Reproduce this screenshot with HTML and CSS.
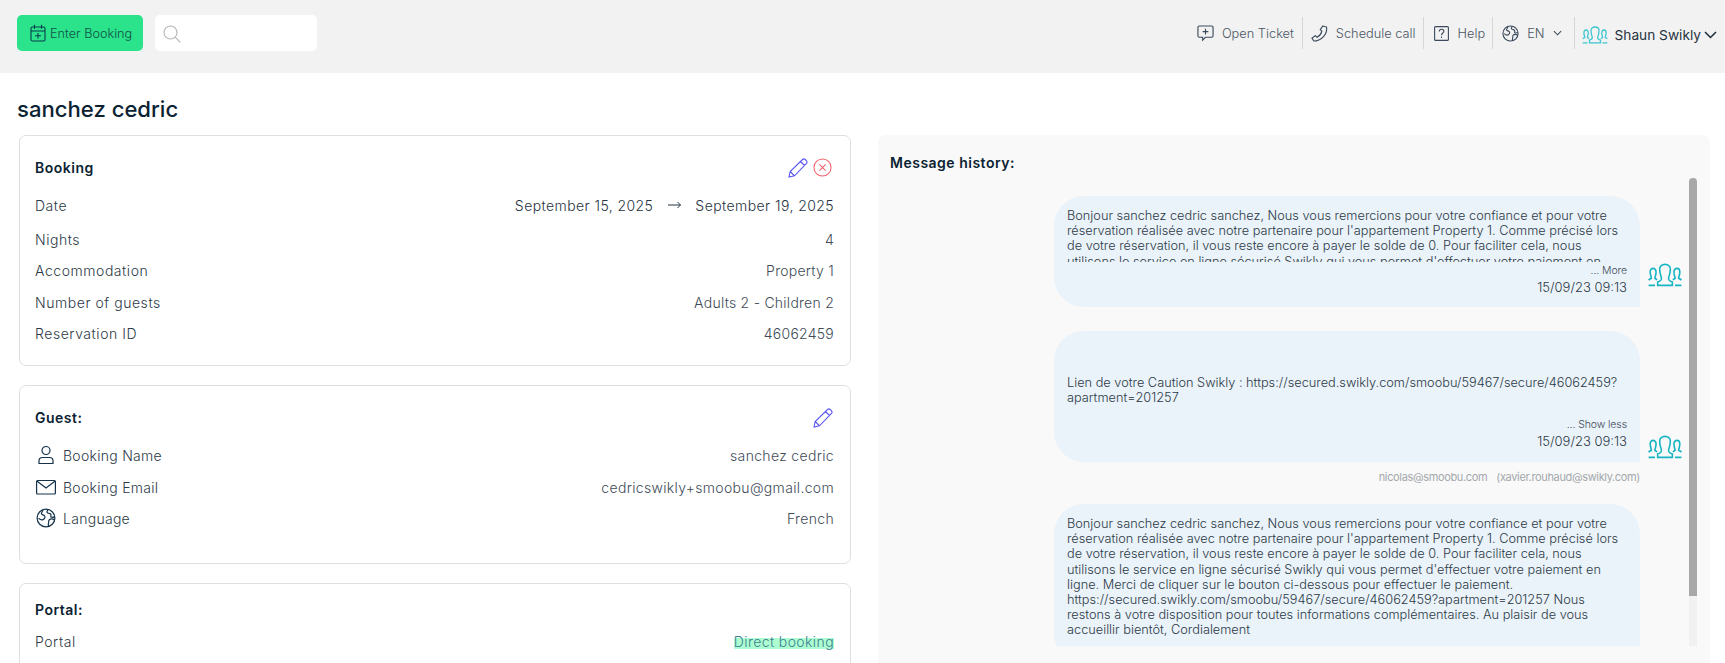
FILE: index.html
```html
<!DOCTYPE html>
<html lang="en">
<head>
<meta charset="utf-8">
<title>sanchez cedric</title>
<link rel="stylesheet" href="styles.css">
</head>
<body>
<header class="topbar">
  <div class="top-left">
    <button class="enter-btn">
      <svg class="ic-cal" viewBox="0 0 16 18" fill="none" stroke="#0d3b4f" stroke-width="1.1"><rect x="1" y="3" width="14" height="14" rx="1.5"/><path d="M1 7h14M4.500 .8v4M11.500 .8v4M8 9v5.500M5 11.800h6"/></svg>
      <span>Enter Booking</span>
    </button>
    <div class="search">
      <svg class="ic-search" viewBox="0 0 18 18" fill="none" stroke="#b9b9b9" stroke-width="1.2"><circle cx="7.500" cy="7.500" r="6.500"/><path d="M12.300 12.300l5 5"/></svg>
    </div>
  </div>
  <nav class="top-right">
    <a class="nav-item ticket"><svg class="ic-nav" viewBox="0 0 18 18" fill="none" stroke="#3a4a5c" stroke-width="1.200"><path d="M2.500 1h13a1.500 1.500 0 0 1 1.500 1.500v9a1.500 1.500 0 0 1-1.500 1.500H9l-3 3v-3H2.500A1.500 1.500 0 0 1 1 11.500v-9A1.500 1.500 0 0 1 2.500 1zM9 4v6M6 7h6"/></svg><span>Open Ticket</span></a>
    <a class="nav-item phone"><svg class="ic-nav" viewBox="0 0 18 18" fill="none" stroke="#3a4a5c" stroke-width="1.200"><path d="M12.500 1l4 1.200c.5 4-1 7.800-3.500 10.300S6.500 17 3 17l-2-3.200 3.500-2.500 2 1.700c2.500-1.500 4.500-4 5-6.500L9.800 5z"/></svg><span>Schedule call</span></a>
    <a class="nav-item help"><svg class="ic-nav" viewBox="0 0 15 15" fill="none" stroke="#3a4a5c" stroke-width="1.100"><rect x=".6" y=".6" width="13.800" height="13.800" rx="1"/><path d="M5.300 5.500c0-3 4.600-3 4.600-.2 0 1.700-2.400 1.700-2.400 4"/><path d="M7.500 10.500v1.500"/></svg><span>Help</span></a>
    <a class="nav-item lang"><svg class="ic-nav" viewBox="0 0 18 18" fill="none" stroke="#3a4a5c" stroke-width="1.200"><use href="#globe-shape"/></svg><span>EN</span><svg class="chev-sm" viewBox="0 0 10 6" fill="none" stroke="#3a4a5c" stroke-width="1.200"><path d="M1 1l4 4 4-4"/></svg></a>
    <a class="nav-item user"><svg class="ic-users" viewBox="0 0 26 18" fill="none" stroke="#3ec6d3" stroke-width="1.300"><use href="#users-shape"/></svg><span>Shaun Swikly</span><svg class="chev-lg" viewBox="0 0 13 8" fill="none" stroke="#1d2b3a" stroke-width="1.500"><path d="M1 1l5.500 5.500L12 1"/></svg></a>
  </nav>
</header>

<svg class="defs">
  <defs>
    <g id="users-shape">
      <path d="M7.500 16.800v-2.600c2.500-.7 3.200-1.500 2.700-3.500C9.200 8.200 9 6 9 4.500 9 2.500 10.700 1 13 1s4 1.500 4 3.500c0 1.500-.2 3.700-1.200 6.200-.5 2 .2 2.800 2.700 3.500v2.600z"/>
      <path d="M7 12.800c-.5-.6-1-1-1.600-1.300.3-2 .9-2.800.9-4.800 0-1.300-.8-2.700-2.300-2.700S1.900 5.400 1.900 6.700c0 2 .6 2.800.9 4.800-.8.400-1.500.7-2.100 1.300M.7 16.800h4.800"/>
      <path d="M19 12.800c.5-.6 1-1 1.600-1.300-.3-2-.9-2.800-.9-4.800 0-1.300.8-2.700 2.300-2.700s2.100 1.400 2.100 2.700c0 2-.6 2.800-.9 4.800.8.400 1.500.7 2.100 1.300M20.500 16.800h4.800"/>
    </g>
    <g id="globe-shape">
      <circle cx="9" cy="9" r="8"/>
      <path d="M6.200 1.500C6.600 3 4.800 3.600 4.800 5c0 1.300 2.200 1 3 2.200.8 1.200-.3 2.800-1.500 3.300-1.400.6-3-.4-4-1.300"/>
      <path d="M11 1.400c-1 1-1.600 2.200-.6 3 1 .8 2.500.2 3 1.300.4 1-.6 1.700.2 2.500.8.600 2 .2 3.200-.2"/>
      <path d="M16.800 11c-1.400-1-3.600-1.400-4.800-.4-1.200 1-.2 2.300-.8 3.400-.4.800-.2 1.600.4 2.500"/>
    </g>
    <g id="pencil-shape">
      <path d="M1 19l1.200-5.500L14.500 1.500c.8-.7 1.900-.7 2.600 0l1.400 1.400c.7.7.7 1.800 0 2.500L6.500 17.800zM12.500 3.500l4 4M2.200 13.500l4.300 4.300"/>
    </g>
  </defs>
</svg>

<main class="page">
  <h1 class="title">sanchez cedric</h1>
  <div class="columns">
    <section class="left">
      <article class="card card-booking">
        <div class="card-head">
          <h2>Booking</h2>
          <div class="actions">
            <svg class="ic-pencil" viewBox="0 0 20 20" fill="none" stroke="#5a55f5" stroke-width="1.100"><use href="#pencil-shape"/></svg>
            <svg class="ic-close" viewBox="0 0 20 20" fill="none" stroke="#f4606c" stroke-width="1.100"><circle cx="10" cy="10" r="9"/><path d="M6.800 6.800l6.400 6.400M13.200 6.800l-6.400 6.400"/></svg>
          </div>
        </div>
        <div class="row row-date"><span class="label">Date</span><span class="value dates"><span>September 15, 2025</span><svg class="arrow" viewBox="0 0 13 8" fill="none" stroke="#27343f" stroke-width="1"><path d="M0 4h12.500M9.500 1l3 3-3 3"/></svg><span>September 19, 2025</span></span></div>
        <div class="row r-nights"><span class="label">Nights</span><span class="value">4</span></div>
        <div class="row r-acc"><span class="label">Accommodation</span><span class="value">Property 1</span></div>
        <div class="row r-num"><span class="label">Number of guests</span><span class="value">Adults 2 - Children 2</span></div>
        <div class="row r-res"><span class="label">Reservation ID</span><span class="value">46062459</span></div>
      </article>

      <article class="card card-guest">
        <div class="card-head">
          <h2>Guest:</h2>
          <div class="actions">
            <svg class="ic-pencil" viewBox="0 0 20 20" fill="none" stroke="#5a55f5" stroke-width="1.100"><use href="#pencil-shape"/></svg>
          </div>
        </div>
        <div class="row r-g1"><span class="label with-icon"><svg class="ic-row" viewBox="0 0 20 20" fill="none" stroke="#14334a" stroke-width="1.200"><circle cx="10" cy="5.500" r="4"/><path d="M3 18.500v-2.500c0-2 1.500-3.500 3.500-3.500h7c2 0 3.500 1.500 3.500 3.500v2.500z"/></svg>Booking Name</span><span class="value">sanchez cedric</span></div>
        <div class="row r-g2"><span class="label with-icon"><svg class="ic-row" viewBox="0 0 20 20" fill="none" stroke="#14334a" stroke-width="1.200"><rect x=".6" y="3.500" width="18.800" height="13.500" rx="1"/><path d="M.8 4l9.200 7 9.200-7"/></svg>Booking Email</span><span class="value">cedricswikly+smoobu@gmail.com</span></div>
        <div class="row r-g3"><span class="label with-icon"><svg class="ic-row" viewBox="0 0 18 18" fill="none" stroke="#14334a" stroke-width="1.100"><use href="#globe-shape"/></svg>Language</span><span class="value">French</span></div>
      </article>

      <article class="card card-portal">
        <h2>Portal:</h2>
        <div class="row r-p"><span class="label">Portal</span><span class="value"><mark class="badge">Direct booking</mark></span></div>
      </article>
    </section>

    <aside class="history">
      <h2 class="history-title">Message history:</h2>
      <div class="scroller">
        <div class="scrollbar"><div class="thumb"></div></div>
        <div class="msg-line m1">
          <div class="bubble">
            <div class="clip">Bonjour sanchez cedric sanchez, Nous vous remercions pour votre confiance et pour votre réservation réalisée avec notre partenaire pour l'appartement Property 1. Comme précisé lors de votre réservation, il vous reste encore à payer le solde de 0. Pour faciliter cela, nous utilisons le service en ligne sécurisé Swikly qui vous permet d'effectuer votre paiement en ligne.</div>
            <div class="more">... More</div>
            <div class="stamp">15/09/23 09:13</div>
          </div>
          <svg class="ic-avatar" viewBox="0 0 26 18" fill="none" stroke="#17b5c4" stroke-width="1.200"><use href="#users-shape"/></svg>
        </div>
        <div class="msg-line m2">
          <div class="bubble">
            <div class="full">Lien de votre Caution Swikly : https://secured.swikly.com/smoobu/59467/secure/46062459?<br>apartment=201257</div>
            <div class="more">... Show less</div>
            <div class="stamp">15/09/23 09:13</div>
          </div>
          <svg class="ic-avatar" viewBox="0 0 26 18" fill="none" stroke="#17b5c4" stroke-width="1.200"><use href="#users-shape"/></svg>
        </div>
        <div class="emails"><span>nicolas@smoobu.com</span><span>(xavier.rouhaud@swikly.com)</span></div>
        <div class="msg-line m3">
          <div class="bubble"><div class="long">Bonjour sanchez cedric sanchez, Nous vous remercions pour votre confiance et pour votre réservation réalisée avec notre partenaire pour l'appartement Property 1. Comme précisé lors de votre réservation, il vous reste encore à payer le solde de 0. Pour faciliter cela, nous utilisons le service en ligne sécurisé Swikly qui vous permet d'effectuer votre paiement en ligne. Merci de cliquer sur le bouton ci-dessous pour effectuer le paiement. https://secured.swikly.com/smoobu/59467/secure/46062459?apartment=201257 Nous restons à votre disposition pour toutes informations complémentaires. Au plaisir de vous accueillir bientôt, Cordialement</div></div>
        </div>
      </div>
    </aside>
  </div>
</main>
</body>
</html>
```
FILE: styles.css
```css
* { box-sizing: border-box; }
html, body { margin: 0; height: 663px; overflow: hidden; background: #fff; }
body { font-family: Inter, "Open Sans", sans-serif; color: #27343f; font-size: 14px; }
.defs { display: none; }

.topbar { height: 73px; background: #f2f2f2; display: flex; justify-content: space-between; padding: 15px 8px 0 17px; }
.top-left { display: flex; gap: 12px; align-items: flex-start; }
.enter-btn { width: 126px; height: 36px; border: 0; border-radius: 5px; background: #2ae38b; color: #135048; display: flex; align-items: center; padding: 0 0 0 13px; gap: 4px; font: 350 12.700px Inter, sans-serif; }
.ic-cal { width: 16px; height: 18px; flex: none; }
.search { width: 162px; height: 36px; background: #fff; border-radius: 5px; padding: 10px 0 0 8px; }
.ic-search { width: 18px; height: 18px; display: block; }

.top-right { display: flex; height: 32px; margin-top: 2px; }
.nav-item { display: flex; align-items: center; color: #4a5664; font-size: 12.800px; font-weight: 350; white-space: nowrap; border-left: 1px solid #d6d6d6; height: 32px; }
.ic-nav { width: 17px; height: 17px; flex: none; }
.ticket { border-left: 0; padding-right: 8px; gap: 8px; }
.phone { padding: 0 7px 0 8px; gap: 8px; }
.help { padding: 0 7px 0 10px; gap: 9px; }
.help .ic-nav { width: 15px; height: 15px; }
.lang { padding: 0 12px 0 9px; gap: 8px; }
.chev-sm { width: 9px; height: 6px; }
.user { padding: 4px 0 0 7px; gap: 7px; font-size: 13.700px; font-weight: 400; color: #27343f; }
.ic-users { width: 26px; height: 18px; }
.chev-lg { width: 13px; height: 8px; margin-left: -4px; }

.page { padding: 0 14px 0 17px; }
.title { margin: 0; height: 62px; padding-top: 23px; font-size: 22.100px; line-height: 27px; font-weight: 500; color: #0b2233; }
.columns { display: flex; height: 528px; overflow: hidden; }
.left { width: 834px; padding-left: 2px; flex: none; }
.card { border: 1px solid #dfdfdf; border-radius: 7px; padding: 0 16px 0 15px; margin-bottom: 19px; }
.card h2, .history-title { margin: 0; font-size: 14px; font-weight: 600; color: #0b2233; line-height: 20px; letter-spacing: .5px; }
.card-head { display: flex; justify-content: space-between; align-items: center; height: 20px; }
.card-booking { height: 231px; padding-top: 22px; }
.card-guest { height: 179px; padding-top: 22px; }
.card-portal { height: 120px; padding-top: 16px; }
.actions { display: flex; gap: 5px; margin-right: 2px; }
.ic-pencil { width: 20px; height: 20px; }
.ic-close { width: 19px; height: 19px; }
.card-guest .actions { margin-right: 1px; }
.row { display: flex; justify-content: space-between; align-items: center; height: 20px; color: #27343f; font-size: 14px; letter-spacing: .25px; }
.label { color: #2c3a46; font-weight: 350; letter-spacing: .55px; }
.value { color: #414c58; font-weight: 300; }
.card-guest .value { letter-spacing: .33px; }
.dates { display: flex; align-items: center; color: #27343f; letter-spacing: .43px; }
.arrow { width: 13px; height: 8px; margin: 0 14px 0 15px; }
.row-date { margin-top: 17px; }
.r-nights { margin-top: 14px; }
.r-acc { margin-top: 11px; }
.r-num { margin-top: 12px; }
.r-res { margin-top: 11px; }
.r-g1 { margin-top: 17px; }
.r-g2 { margin-top: 12px; }
.r-g3 { margin-top: 11px; }
.with-icon { display: flex; align-items: center; gap: 7px; letter-spacing: .28px; }
.ic-row { width: 20px; height: 20px; margin-left: 1px; flex: none; }
.r-p { margin-top: 11px; }
.badge { background: linear-gradient(transparent 0 5px, #adfdd2 5px 16px, transparent 16px); color: #3d7f8f; padding: 0; letter-spacing: .4px; }

.history { margin-left: 27px; width: 832px; height: 528px; background: #f9f9f9; border-radius: 7px 7px 0 0; padding: 18px 0 0 12px; position: relative; }
.history-title { height: 25px; }
.scroller { position: relative; height: 468px; margin-right: 13px; overflow: hidden; }
.scrollbar { position: absolute; right: 0; top: 0; width: 8px; height: 468px; background: #f1f1f1; }
.thumb { height: 418px; background: #a8a8a8; border-radius: 4px 4px 0 0; }
.msg-line { display: flex; align-items: flex-end; padding-left: 164px; }
.bubble { width: 586px; background: #eaf2fa; border-radius: 30px 30px 0 30px; padding: 12px 13px 0 13px; font-size: 12.750px; line-height: 15.200px; color: #2c3a46; font-weight: 350; }
.ic-avatar { width: 38px; height: 24px; margin: 0 0 20px 6px; flex: none; }
.m1 { padding-top: 18px; }
.m1 .bubble { height: 111px; }
.clip { height: 54px; overflow: hidden; padding-right: 7.500px; }
.more { text-align: right; font-size: 10.500px; height: 17px; line-height: 17px; color: #414c58; letter-spacing: -.1px; }
.stamp { text-align: right; font-size: 13px; line-height: 17px; color: #2c3a46; }
.m2 { padding-top: 24px; }
.m2 .bubble { height: 131px; padding-top: 44px; }
.m2 .ic-avatar { margin-bottom: 3px; }
.full { height: 41px; padding-right: 7.500px; }
.emails { display: flex; justify-content: flex-end; gap: 9px; width: 750px; height: 42px; padding-top: 7px; font-size: 11px; letter-spacing: -.35px; line-height: 16px; color: #a3a8ad; }
.m3 .bubble { height: 160px; }
.long { padding-right: 7.500px; }
```
